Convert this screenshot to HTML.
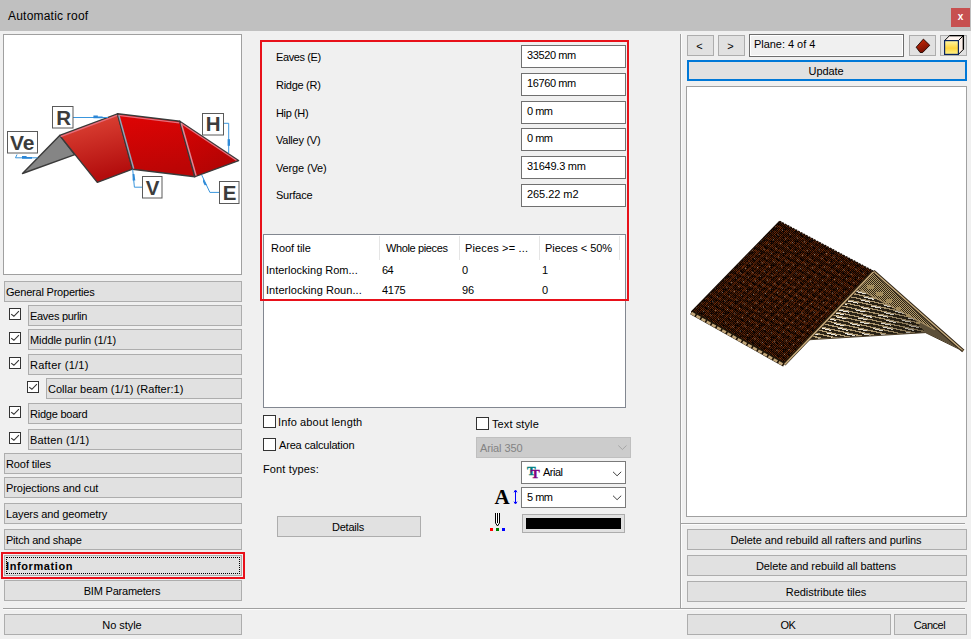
<!DOCTYPE html>
<html><head><meta charset="utf-8"><title>Automatic roof</title>
<style>
*{box-sizing:border-box;margin:0;padding:0}
html,body{width:971px;height:639px;overflow:hidden;background:#f0f0f0}
body{position:relative;font-family:"Liberation Sans","DejaVu Sans",sans-serif;font-size:11px;color:#000;line-height:13px}
.a{position:absolute;white-space:nowrap}
.title{left:0;top:0;width:971px;height:31px;background:#c0c0c0}
.title>span{position:absolute;left:8px;top:9px;font-size:12px;line-height:14px}
.close{left:951px;top:8px;width:19px;height:19px;background:#c75050;color:#fff;font-weight:bold;font-size:10px;text-align:center;line-height:17px}
.btn{background:#e1e1e1;border:1px solid #adadad;height:21px;line-height:19px;padding-left:1px;padding-top:1px}
.btn.c{text-align:center;padding-left:0;padding-right:2px}
.panel{background:#fff;border:1px solid #828790}
.cb{width:13px;height:13px;background:#fff;border:1px solid #333}
.inp{background:#fff;border:1px solid #707070;height:23px;line-height:19px;padding-left:5px;left:521px;width:105px}
.lbl{left:276px}
.hl{height:1px;background:#a0a0a0}
.vl{width:1px;background:#a0a0a0}
</style></head><body>
<div class="a title"><span><span class="t" style="letter-spacing:0.21px">Automatic roof</span></span></div>
<div class="a close"><span class="t">x</span></div>

<!-- left preview -->
<div class="a panel" style="left:3px;top:34px;width:239px;height:241px;border-color:#a0a0a0"></div>
<svg class="a" style="left:4px;top:35px" width="237" height="239" viewBox="4 35 237 239">
<defs>
<linearGradient id="g1" x1="0" y1="0" x2="0.25" y2="1"><stop offset="0" stop-color="#e24a3a"/><stop offset="1" stop-color="#b30d0d"/></linearGradient>
<linearGradient id="g2" x1="0" y1="0" x2="0.2" y2="1"><stop offset="0" stop-color="#e00404"/><stop offset="1" stop-color="#bb0505"/></linearGradient>
<linearGradient id="g3" x1="0" y1="0" x2="0.6" y2="1"><stop offset="0" stop-color="#d80303"/><stop offset="1" stop-color="#b00404"/></linearGradient>
</defs>
<g stroke-linejoin="round">
<polygon points="22.5,173.5 59.7,135.4 74.8,154.7" fill="#858585" stroke="#3a3a3a" stroke-width="1.4"/>
<polygon points="59.7,135.4 117.5,113.8 132.5,169.2 97.3,182.4" fill="url(#g1)" stroke="#3a3a3a" stroke-width="1.4"/>
<polygon points="117.5,113.8 179.8,121.3 194.9,176.7 132.5,169.2" fill="url(#g2)" stroke="#3a3a3a" stroke-width="1.4"/>
<polygon points="179.8,121.3 238.6,160.7 194.9,176.7" fill="url(#g3)" stroke="#3a3a3a" stroke-width="1.4"/>
<path d="M60.6,136.6 L117.2,115.4 M118.5,115.4 L179.3,122.8 M181.2,123.6 L236.5,160.4" stroke="#e4707e" stroke-width="1.2" fill="none"/>
<path d="M118.9,115.4 L133.7,168.6" stroke="#93a4b8" stroke-width="1.5" fill="none"/>
<path d="M181.2,123 L196.1,175.6" stroke="#de8896" stroke-width="1.5" fill="none"/>
</g>
<g fill="none" stroke="#3a96dd" stroke-width="1">
<path d="M73,117.5 H108"/><path d="M93.4,115.6 h4.4 v1 h4.8 v1.7 h-9.2z" fill="#2b86d6" stroke="none"/>
<path d="M17,154.5 L15.5,157.8 H37.6"/><path d="M22,155.9 h4.6 v1 h5.4 v1.8 h-10z" fill="#2b86d6" stroke="none"/>
<path d="M132.7,169.5 L134.4,187.2 H142.3"/><path d="M132.6,174 l1.8,0 l0.9,6.6 l-2.7,0z" fill="#2f8ad8" stroke="none"/>
<path d="M223.6,123.3 H228.7 V153.2"/><path d="M227.6,139.2 h2.4 v6.6 h-2.4z" fill="#2f8ad8" stroke="none"/>
<path d="M201.6,174.8 L209.9,192.4 H219.3"/><path d="M203.2,178.4 l3.6,6.6 l-2.2,0.2 l-1.6,-3.4z" fill="#2f8ad8" stroke="none"/>
</g>
<g fill="#fff" stroke="#5a5a5a" stroke-width="1">
<rect x="7.5" y="131.5" width="30" height="21.5"/>
<rect x="52.5" y="106.5" width="20.5" height="21.5"/>
<rect x="202.5" y="113.5" width="21" height="21.5"/>
<rect x="142.5" y="176.5" width="19.5" height="21.5"/>
<rect x="219.5" y="181.5" width="19.5" height="22"/>
</g>
<g font-family="'Liberation Sans',sans-serif" font-weight="bold" font-size="20.5" fill="#3c3c3c" text-anchor="middle">
<text x="22.2" y="149.8" textLength="24.5" lengthAdjust="spacingAndGlyphs">Ve</text>
<text x="63.6" y="125">R</text>
<text x="213.1" y="130.7">H</text>
<text x="152.5" y="194.5">V</text>
<text x="229.5" y="199.9">E</text>
</g>
</svg>

<!-- left buttons -->
<div class="a btn" style="left:4px;top:281px;width:238px"><span class="t" style="letter-spacing:-0.21px">General Properties</span></div>
<div class="a cb" style="left:9px;top:308px;width:12px;height:12px"><svg width="10" height="10" viewBox="1 1 10 10" style="display:block"><path d="M2.2,6.1 L4.9,8.3 L9.9,3.1" fill="none" stroke="#333" stroke-width="1.1"/></svg></div>
<div class="a btn" style="left:28px;top:305px;width:214px"><span class="t" style="letter-spacing:-0.29px">Eaves purlin</span></div>
<div class="a cb" style="left:9px;top:332px;width:12px;height:12px"><svg width="10" height="10" viewBox="1 1 10 10" style="display:block"><path d="M2.2,6.1 L4.9,8.3 L9.9,3.1" fill="none" stroke="#333" stroke-width="1.1"/></svg></div>
<div class="a btn" style="left:28px;top:329px;width:214px"><span class="t" style="letter-spacing:-0.10px">Middle purlin (1/1)</span></div>
<div class="a cb" style="left:9px;top:357px;width:12px;height:12px"><svg width="10" height="10" viewBox="1 1 10 10" style="display:block"><path d="M2.2,6.1 L4.9,8.3 L9.9,3.1" fill="none" stroke="#333" stroke-width="1.1"/></svg></div>
<div class="a btn" style="left:28px;top:354px;width:214px"><span class="t" style="letter-spacing:0.25px">Rafter (1/1)</span></div>
<div class="a cb" style="left:27px;top:381px;width:12px;height:12px"><svg width="10" height="10" viewBox="1 1 10 10" style="display:block"><path d="M2.2,6.1 L4.9,8.3 L9.9,3.1" fill="none" stroke="#333" stroke-width="1.1"/></svg></div>
<div class="a btn" style="left:46px;top:378px;width:196px"><span class="t" style="letter-spacing:0.03px">Collar beam (1/1) (Rafter:1)</span></div>
<div class="a cb" style="left:9px;top:406px;width:12px;height:12px"><svg width="10" height="10" viewBox="1 1 10 10" style="display:block"><path d="M2.2,6.1 L4.9,8.3 L9.9,3.1" fill="none" stroke="#333" stroke-width="1.1"/></svg></div>
<div class="a btn" style="left:28px;top:403px;width:214px"><span class="t" style="letter-spacing:-0.23px">Ridge board</span></div>
<div class="a cb" style="left:9px;top:432px;width:12px;height:12px"><svg width="10" height="10" viewBox="1 1 10 10" style="display:block"><path d="M2.2,6.1 L4.9,8.3 L9.9,3.1" fill="none" stroke="#333" stroke-width="1.1"/></svg></div>
<div class="a btn" style="left:28px;top:429px;width:214px"><span class="t" style="letter-spacing:0.16px">Batten (1/1)</span></div>
<div class="a btn" style="left:4px;top:453px;width:238px"><span class="t" style="letter-spacing:-0.10px">Roof tiles</span></div>
<div class="a btn" style="left:4px;top:477px;width:238px"><span class="t" style="letter-spacing:-0.07px">Projections and cut</span></div>
<div class="a btn" style="left:4px;top:503px;width:238px"><span class="t" style="letter-spacing:-0.12px">Layers and geometry</span></div>
<div class="a btn" style="left:4px;top:529px;width:238px"><span class="t" style="letter-spacing:-0.22px">Pitch and shape</span></div>
<div class="a" style="left:1px;top:552px;width:244px;height:27px;border:2px solid #e8111a"></div>
<div class="a btn" style="left:4px;top:555px;width:238px;font-weight:bold"><span class="t" style="letter-spacing:0.60px">Information</span></div>
<div class="a" style="left:6px;top:557px;width:234px;height:17px;border:1px dotted #000"></div>
<div class="a btn c" style="left:4px;top:580px;width:238px"><span class="t" style="letter-spacing:-0.21px">BIM Parameters</span></div>
<div class="a hl" style="left:3px;top:608px;width:962px"></div><div class="a hl" style="left:3px;top:609px;width:962px;background:#fcfcfc"></div>
<div class="a btn c" style="left:4px;top:614px;width:238px"><span class="t" style="letter-spacing:-0.06px">No style</span></div>

<!-- middle -->
<div class="a lbl" style="top:51px"><span class="t" style="letter-spacing:-0.39px">Eaves (E)</span></div>
<div class="a lbl" style="top:79px"><span class="t" style="letter-spacing:-0.28px">Ridge (R)</span></div>
<div class="a lbl" style="top:107px"><span class="t" style="letter-spacing:-0.38px">Hip (H)</span></div>
<div class="a lbl" style="top:134px"><span class="t" style="letter-spacing:-0.25px">Valley (V)</span></div>
<div class="a lbl" style="top:162px"><span class="t" style="letter-spacing:-0.15px">Verge (Ve)</span></div>
<div class="a lbl" style="top:189px"><span class="t" style="letter-spacing:-0.22px">Surface</span></div>
<div class="a inp" style="top:45px"><span class="t" style="letter-spacing:-0.39px">33520 mm</span></div>
<div class="a inp" style="top:73px"><span class="t" style="letter-spacing:-0.39px">16760 mm</span></div>
<div class="a inp" style="top:101px"><span class="t" style="letter-spacing:-0.50px">0 mm</span></div>
<div class="a inp" style="top:128px"><span class="t" style="letter-spacing:-0.50px">0 mm</span></div>
<div class="a inp" style="top:156px"><span class="t" style="letter-spacing:-0.25px">31649.3 mm</span></div>
<div class="a inp" style="top:184px"><span class="t" style="letter-spacing:-0.06px">265.22 m2</span></div>

<div class="a panel" style="left:263px;top:234px;width:363px;height:174px"></div>
<div class="a" style="left:271px;top:242px"><span class="t" style="letter-spacing:-0.06px">Roof tile</span></div>
<div class="a" style="left:386px;top:242px"><span class="t" style="letter-spacing:-0.37px">Whole pieces</span></div>
<div class="a" style="left:465px;top:242px"><span class="t" style="letter-spacing:0.15px">Pieces &gt;= ...</span></div>
<div class="a" style="left:545px;top:242px"><span class="t" style="letter-spacing:-0.04px">Pieces &lt; 50%</span></div>
<div class="a" style="left:379px;top:236px;width:1px;height:24px;background:#e5e5e5"></div>
<div class="a" style="left:459px;top:236px;width:1px;height:24px;background:#e5e5e5"></div>
<div class="a" style="left:539px;top:236px;width:1px;height:24px;background:#e5e5e5"></div>
<div class="a" style="left:619px;top:236px;width:1px;height:24px;background:#e5e5e5"></div>
<div class="a" style="left:266px;top:264px"><span class="t">Interlocking Rom...</span></div>
<div class="a" style="left:382px;top:264px"><span class="t" style="letter-spacing:-0.50px">64</span></div>
<div class="a" style="left:462px;top:264px"><span class="t">0</span></div>
<div class="a" style="left:542px;top:264px"><span class="t">1</span></div>
<div class="a" style="left:266px;top:284px"><span class="t" style="letter-spacing:0.05px">Interlocking Roun...</span></div>
<div class="a" style="left:382px;top:284px"><span class="t" style="letter-spacing:-0.30px">4175</span></div>
<div class="a" style="left:462px;top:284px"><span class="t">96</span></div>
<div class="a" style="left:542px;top:284px"><span class="t">0</span></div>
<div class="a" style="left:260px;top:40px;width:369px;height:261px;border:2px solid #e8111a"></div>

<div class="a cb" style="left:263px;top:415px"></div>
<div class="a" style="left:278px;top:416px"><span class="t" style="letter-spacing:0.14px">Info about length</span></div>
<div class="a cb" style="left:263px;top:438px"></div>
<div class="a" style="left:279px;top:439px"><span class="t" style="letter-spacing:-0.18px">Area calculation</span></div>
<div class="a" style="left:263px;top:463px"><span class="t" style="letter-spacing:0.13px">Font types:</span></div>
<div class="a cb" style="left:476px;top:417px"></div>
<div class="a" style="left:492px;top:418px"><span class="t" style="letter-spacing:0.10px">Text style</span></div>
<div class="a" style="left:476px;top:437px;width:155px;height:21px;background:#cccccc;border:1px solid #bfbfbf;color:#838383;line-height:21px;padding-left:3px"><span class="t" style="letter-spacing:-0.11px">Arial 350</span></div>
<div class="a" style="left:521px;top:461px;width:105px;height:23px;background:#fff;border:1px solid #7a7a7a;line-height:21px;padding-left:21px"><span class="t" style="letter-spacing:-0.50px">Arial</span></div>
<div class="a" style="left:521px;top:487px;width:105px;height:21px;background:#fff;border:1px solid #7a7a7a;line-height:19px;padding-left:5px"><span class="t" style="letter-spacing:-0.50px">5 mm</span></div>
<div class="a" style="left:522px;top:514px;width:103px;height:19px;background:#e1e1e1;border:1px solid #adadad"></div>
<div class="a" style="left:526px;top:518px;width:95px;height:11px;background:#000"></div>
<svg class="a" style="left:485px;top:430px" width="150" height="110" viewBox="485 430 150 110">
<path d="M618.3,445.5 l4.1,4 l4.1,-4" fill="none" stroke="#a6a6a6" stroke-width="1"/>
<path d="M613,471.8 l4.1,4 l4.1,-4" fill="none" stroke="#404040" stroke-width="1"/>
<path d="M613,495.7 l4.1,4 l4.1,-4" fill="none" stroke="#404040" stroke-width="1"/>
<text x="527" y="474.8" font-family="'Liberation Serif',serif" font-weight="bold" font-size="13" fill="#008080" stroke="#008080" stroke-width="0.35">T</text>
<text x="530.8" y="477.9" font-family="'Liberation Serif',serif" font-weight="bold" font-size="13.5" fill="#800080" stroke="#800080" stroke-width="0.35">T</text>
<text x="494.6" y="504.1" font-family="'Liberation Serif',serif" font-weight="bold" font-size="21" fill="#000">A</text>
<path d="M515.5,491 V503" stroke="#0000ff" stroke-width="1" fill="none"/>
<path d="M514,492.3 L515.5,490 L517,492.3 M514,501.7 L515.5,504 L517,501.7" stroke="#0000ff" stroke-width="1" fill="none"/>
<path d="M495.5,513 V523 L497.5,526 L499.5,523 V513" fill="#fff" stroke="#000" stroke-width="1"/>
<path d="M497.5,513 V523" stroke="#000" stroke-width="1"/>
<rect x="490" y="528" width="3" height="3" fill="#ff0000"/>
<rect x="496" y="528" width="3" height="3" fill="#008000"/>
<rect x="502" y="528" width="3" height="3" fill="#0000ff"/>
</svg>
<div class="a btn c" style="left:277px;top:516px;width:144px"><span class="t" style="letter-spacing:-0.22px">Details</span></div>

<!-- right -->
<div class="a vl" style="left:680px;top:34px;height:574px"></div><div class="a vl" style="left:681px;top:34px;height:574px;background:#fcfcfc"></div>
<div class="a btn c" style="left:687px;top:35px;width:27px"><span class="t">&lt;</span></div>
<div class="a btn c" style="left:718px;top:35px;width:27px"><span class="t">&gt;</span></div>
<div class="a" style="left:749px;top:34px;width:155px;height:23px;border:1px solid #6e6e6e;box-shadow:inset 0 0 0 1px #fff;line-height:19px;padding-left:4px"><span class="t" style="letter-spacing:-0.04px">Plane: 4 of 4</span></div>
<div class="a btn" style="left:909px;top:35px;width:27px"></div>
<div class="a btn" style="left:940px;top:35px;width:27px"></div>
<svg class="a" style="left:909px;top:33px" width="60" height="26" viewBox="909 33 60 26">
<defs><linearGradient id="dg" x1="0.3" y1="0" x2="0.7" y2="1"><stop offset="0" stop-color="#c82a08"/><stop offset="1" stop-color="#6e0d02"/></linearGradient>
<linearGradient id="cg" x1="0" y1="0" x2="0" y2="1"><stop offset="0" stop-color="#fff7a6"/><stop offset="0.55" stop-color="#ffd53f"/><stop offset="1" stop-color="#fff38c"/></linearGradient></defs>
<polygon points="923.4,39.1 929.8,45.3 922.7,52.5 920.1,52.5 916.2,47.2" fill="url(#dg)" stroke="#1a0500" stroke-width="0.9" stroke-linejoin="round"/>
<polygon points="944.6,40.6 949.6,35.6 963.4,35.6 958.4,40.6" fill="#fdf3ee" stroke="#000" stroke-width="1"/>
<polygon points="958.4,40.6 963.4,35.6 963.4,49.4 958.4,54.4" fill="#fbeee8" stroke="#000" stroke-width="1"/>
<path d="M949.6,35.6 H963.4 V49.4" stroke="#000" stroke-width="1.3" fill="none"/>
<rect x="944.6" y="40.6" width="13.8" height="13.8" fill="url(#cg)" stroke="#0a2460" stroke-width="1.2"/>
</svg>
<div class="a btn c" style="left:687px;top:60px;width:280px;border:2px solid #0078d7;line-height:17px"><span class="t" style="letter-spacing:-0.09px">Update</span></div>
<div class="a panel" style="left:686px;top:86px;width:281px;height:431px;border-color:#a0a0a0"></div>
<svg class="a" style="left:687px;top:87px" width="279" height="429" viewBox="687 87 279 429">
<defs>
<pattern id="tile" width="12" height="12" patternUnits="userSpaceOnUse"><rect width="12" height="12" fill="#100400"/><rect x="0" y="0" width="1" height="1" fill="#582308"/><rect x="2" y="0" width="1" height="1" fill="#552208"/><rect x="4" y="0" width="1" height="1" fill="#552208"/><rect x="6" y="0" width="1" height="1" fill="#3e1906"/><rect x="10" y="0" width="1" height="1" fill="#3b1705"/><rect x="1" y="1" width="1" height="1" fill="#5b2409"/><rect x="7" y="1" width="1" height="1" fill="#3b1705"/><rect x="9" y="1" width="1" height="1" fill="#67290a"/><rect x="11" y="1" width="1" height="1" fill="#542108"/><rect x="0" y="2" width="1" height="1" fill="#522008"/><rect x="2" y="2" width="1" height="1" fill="#6f2c0b"/><rect x="4" y="2" width="1" height="1" fill="#4a1d07"/><rect x="6" y="2" width="1" height="1" fill="#3d1806"/><rect x="8" y="2" width="1" height="1" fill="#67290a"/><rect x="10" y="2" width="1" height="1" fill="#67290a"/><rect x="11" y="2" width="1" height="1" fill="#2e1204"/><rect x="1" y="3" width="1" height="1" fill="#6e2c0b"/><rect x="5" y="3" width="1" height="1" fill="#481c07"/><rect x="6" y="3" width="1" height="1" fill="#321405"/><rect x="7" y="3" width="1" height="1" fill="#622709"/><rect x="9" y="3" width="1" height="1" fill="#3f1906"/><rect x="10" y="3" width="1" height="1" fill="#411a06"/><rect x="11" y="3" width="1" height="1" fill="#582308"/><rect x="0" y="4" width="1" height="1" fill="#431b06"/><rect x="2" y="4" width="1" height="1" fill="#5c2509"/><rect x="4" y="4" width="1" height="1" fill="#451b06"/><rect x="6" y="4" width="1" height="1" fill="#65280a"/><rect x="8" y="4" width="1" height="1" fill="#451b06"/><rect x="10" y="4" width="1" height="1" fill="#5c2509"/><rect x="1" y="5" width="1" height="1" fill="#471c07"/><rect x="3" y="5" width="1" height="1" fill="#491d07"/><rect x="4" y="5" width="1" height="1" fill="#2a1104"/><rect x="5" y="5" width="1" height="1" fill="#461c07"/><rect x="7" y="5" width="1" height="1" fill="#522008"/><rect x="9" y="5" width="1" height="1" fill="#582308"/><rect x="11" y="5" width="1" height="1" fill="#411a06"/><rect x="0" y="6" width="1" height="1" fill="#66280a"/><rect x="2" y="6" width="1" height="1" fill="#612709"/><rect x="4" y="6" width="1" height="1" fill="#6d2b0a"/><rect x="6" y="6" width="1" height="1" fill="#502008"/><rect x="10" y="6" width="1" height="1" fill="#5f2609"/><rect x="1" y="7" width="1" height="1" fill="#491d07"/><rect x="3" y="7" width="1" height="1" fill="#3d1806"/><rect x="5" y="7" width="1" height="1" fill="#67290a"/><rect x="7" y="7" width="1" height="1" fill="#6b2b0a"/><rect x="11" y="7" width="1" height="1" fill="#3c1806"/><rect x="0" y="8" width="1" height="1" fill="#4d1f07"/><rect x="2" y="8" width="1" height="1" fill="#4d1e07"/><rect x="4" y="8" width="1" height="1" fill="#5d2509"/><rect x="6" y="8" width="1" height="1" fill="#411a06"/><rect x="7" y="8" width="1" height="1" fill="#281004"/><rect x="8" y="8" width="1" height="1" fill="#5f2609"/><rect x="1" y="9" width="1" height="1" fill="#4a1d07"/><rect x="5" y="9" width="1" height="1" fill="#6a2a0a"/><rect x="7" y="9" width="1" height="1" fill="#64280a"/><rect x="9" y="9" width="1" height="1" fill="#5e2509"/><rect x="11" y="9" width="1" height="1" fill="#502008"/><rect x="0" y="10" width="1" height="1" fill="#68290a"/><rect x="2" y="10" width="1" height="1" fill="#4e1f07"/><rect x="4" y="10" width="1" height="1" fill="#3d1806"/><rect x="6" y="10" width="1" height="1" fill="#692a0a"/><rect x="8" y="10" width="1" height="1" fill="#612709"/><rect x="10" y="10" width="1" height="1" fill="#67290a"/><rect x="11" y="10" width="1" height="1" fill="#401906"/><rect x="0" y="11" width="1" height="1" fill="#3b1705"/><rect x="1" y="11" width="1" height="1" fill="#461c07"/><rect x="3" y="11" width="1" height="1" fill="#5b2409"/><rect x="5" y="11" width="1" height="1" fill="#3a1705"/><rect x="7" y="11" width="1" height="1" fill="#441b06"/><rect x="9" y="11" width="1" height="1" fill="#5d2509"/><rect x="11" y="11" width="1" height="1" fill="#4b1e07"/></pattern>

<pattern id="dots" width="2" height="2" patternUnits="userSpaceOnUse"><rect width="2" height="2" fill="#b39a6a"/><rect width="1" height="1" fill="#2e2516"/><rect x="1" y="1" width="1" height="1" fill="#2e2516"/></pattern>
<linearGradient id="ug" gradientUnits="userSpaceOnUse" x1="820" y1="0" x2="935" y2="0"><stop offset="0" stop-color="#1a140a" stop-opacity="0"/><stop offset="0.55" stop-color="#1a140a" stop-opacity="0.12"/><stop offset="1" stop-color="#1a140a" stop-opacity="0.55"/></linearGradient><clipPath id="tc"><polygon points="779.5,221.3 873.4,271.3 784.2,364.3 691.3,312"/></clipPath>
</defs>
<clipPath id="uc"><polygon points="866,280 935,330 925.4,332.4 808.5,339.5"/></clipPath><g clip-path="url(#uc)" shape-rendering="crispEdges" fill="none"><rect x="800" y="270" width="150" height="80" fill="#2a2317"/><path d="M805,235.0 L940,264.9 M805,238.7 L940,268.6 M805,242.4 L940,272.3 M805,246.1 L940,276.0 M805,249.7 L940,279.7 M805,253.4 L940,283.4 M805,257.1 L940,287.1 M805,260.8 L940,290.7 M805,264.5 L940,294.4 M805,268.2 L940,298.1 M805,271.9 L940,301.8 M805,275.6 L940,305.5 M805,279.2 L940,309.2 M805,282.9 L940,312.9 M805,286.6 L940,316.6 M805,290.3 L940,320.2 M805,294.0 L940,323.9 M805,297.7 L940,327.6 M805,301.4 L940,331.3 M805,305.1 L940,335.0 M805,308.7 L940,338.7 M805,312.4 L940,342.4 M805,316.1 L940,346.1 M805,319.8 L940,349.7 M805,323.5 L940,353.4 M805,327.2 L940,357.1 M805,330.9 L940,360.8 M805,334.6 L940,364.5 M805,338.2 L940,368.2 M805,341.9 L940,371.9" stroke="#b7a076" stroke-width="1.25"/><path d="M805,236.1 L940,266.0" stroke="#f4f1e9" stroke-width="1" stroke-dasharray="10 14" stroke-dashoffset="6"/><path d="M805,239.8 L940,269.7" stroke="#f4f1e9" stroke-width="1" stroke-dasharray="10 14" stroke-dashoffset="13"/><path d="M805,243.5 L940,273.4" stroke="#f4f1e9" stroke-width="1" stroke-dasharray="10 14" stroke-dashoffset="9"/><path d="M805,247.2 L940,277.1" stroke="#f4f1e9" stroke-width="1" stroke-dasharray="10 14" stroke-dashoffset="14"/><path d="M805,250.8 L940,280.8" stroke="#f4f1e9" stroke-width="1" stroke-dasharray="10 14" stroke-dashoffset="15"/><path d="M805,254.5 L940,284.5" stroke="#f4f1e9" stroke-width="1" stroke-dasharray="10 14" stroke-dashoffset="2"/><path d="M805,258.2 L940,288.2" stroke="#f4f1e9" stroke-width="1" stroke-dasharray="10 14" stroke-dashoffset="0"/><path d="M805,261.9 L940,291.8" stroke="#f4f1e9" stroke-width="1" stroke-dasharray="10 14" stroke-dashoffset="20"/><path d="M805,265.6 L940,295.5" stroke="#f4f1e9" stroke-width="1" stroke-dasharray="10 14" stroke-dashoffset="6"/><path d="M805,269.3 L940,299.2" stroke="#f4f1e9" stroke-width="1" stroke-dasharray="10 14" stroke-dashoffset="6"/><path d="M805,273.0 L940,302.9" stroke="#f4f1e9" stroke-width="1" stroke-dasharray="10 14" stroke-dashoffset="24"/><path d="M805,276.7 L940,306.6" stroke="#f4f1e9" stroke-width="1" stroke-dasharray="10 14" stroke-dashoffset="11"/><path d="M805,280.3 L940,310.3" stroke="#f4f1e9" stroke-width="1" stroke-dasharray="10 14" stroke-dashoffset="20"/><path d="M805,284.0 L940,314.0" stroke="#f4f1e9" stroke-width="1" stroke-dasharray="10 14" stroke-dashoffset="11"/><path d="M805,287.7 L940,317.7" stroke="#f4f1e9" stroke-width="1" stroke-dasharray="10 14" stroke-dashoffset="15"/><path d="M805,291.4 L940,321.3" stroke="#f4f1e9" stroke-width="1" stroke-dasharray="10 14" stroke-dashoffset="4"/><path d="M805,295.1 L940,325.0" stroke="#f4f1e9" stroke-width="1" stroke-dasharray="10 14" stroke-dashoffset="15"/><path d="M805,298.8 L940,328.7" stroke="#f4f1e9" stroke-width="1" stroke-dasharray="10 14" stroke-dashoffset="21"/><path d="M805,302.5 L940,332.4" stroke="#f4f1e9" stroke-width="1" stroke-dasharray="10 14" stroke-dashoffset="13"/><path d="M805,306.2 L940,336.1" stroke="#f4f1e9" stroke-width="1" stroke-dasharray="10 14" stroke-dashoffset="18"/><path d="M805,309.8 L940,339.8" stroke="#f4f1e9" stroke-width="1" stroke-dasharray="10 14" stroke-dashoffset="16"/><path d="M805,313.5 L940,343.5" stroke="#f4f1e9" stroke-width="1" stroke-dasharray="10 14" stroke-dashoffset="2"/><path d="M805,317.2 L940,347.2" stroke="#f4f1e9" stroke-width="1" stroke-dasharray="10 14" stroke-dashoffset="18"/><path d="M805,320.9 L940,350.8" stroke="#f4f1e9" stroke-width="1" stroke-dasharray="10 14" stroke-dashoffset="14"/><path d="M805,324.6 L940,354.5" stroke="#f4f1e9" stroke-width="1" stroke-dasharray="10 14" stroke-dashoffset="7"/><path d="M805,328.3 L940,358.2" stroke="#f4f1e9" stroke-width="1" stroke-dasharray="10 14" stroke-dashoffset="1"/><path d="M805,332.0 L940,361.9" stroke="#f4f1e9" stroke-width="1" stroke-dasharray="10 14" stroke-dashoffset="21"/><path d="M805,335.7 L940,365.6" stroke="#f4f1e9" stroke-width="1" stroke-dasharray="10 14" stroke-dashoffset="11"/><path d="M805,339.3 L940,369.3" stroke="#f4f1e9" stroke-width="1" stroke-dasharray="10 14" stroke-dashoffset="17"/><path d="M805,343.0 L940,373.0" stroke="#f4f1e9" stroke-width="1" stroke-dasharray="10 14" stroke-dashoffset="21"/><rect x="800" y="270" width="150" height="80" fill="url(#ug)"/></g>
<polygon points="873.2,271.4 963.1,350.7 925.4,332.4" fill="#5c4f38"/>
<polygon points="873.2,272.5 935,329.5 859,289" fill="url(#dots)"/>
<g shape-rendering="crispEdges"><rect x="866.5" y="284.6" width="7.0" height="4.5" fill="#a8905f" fill-opacity="0.85"/><rect x="876.4" y="292.0" width="6.3" height="4.0" fill="#a8905f" fill-opacity="0.85"/><rect x="886.3" y="299.4" width="5.6" height="3.6" fill="#a8905f" fill-opacity="0.85"/><rect x="896.2" y="306.8" width="4.9" height="3.1" fill="#a8905f" fill-opacity="0.85"/><rect x="906.2" y="314.2" width="4.2" height="2.7" fill="#a8905f" fill-opacity="0.85"/><rect x="916.1" y="321.7" width="3.5" height="2.2" fill="#a8905f" fill-opacity="0.85"/></g><path d="M859,289 L935,329.8" stroke="#a89066" stroke-width="1.2" fill="none"/>
<path d="M873.4,271.3 L963.3,351" stroke="#2e2214" stroke-width="3.4" fill="none"/>
<path d="M873.4,271.3 L963.3,351" stroke="#c8ae80" stroke-width="1.4" fill="none"/>
<path d="M808.5,339.8 L925.4,332.6 L963,351" stroke="#4a3c26" stroke-width="1" fill="none"/>
<polygon points="779.5,221.3 873.4,271.3 784.2,364.3 691.3,312" fill="url(#tile)"/>
<g clip-path="url(#tc)"><g transform="matrix(93.9 50 -88.2 90.7 779.5 221.3)" fill="none">
<path d="M0.0556,0 V1 M0.1111,0 V1 M0.1667,0 V1 M0.2222,0 V1 M0.2778,0 V1 M0.3333,0 V1 M0.3889,0 V1 M0.4444,0 V1 M0.5000,0 V1 M0.5556,0 V1 M0.6111,0 V1 M0.6667,0 V1 M0.7222,0 V1 M0.7778,0 V1 M0.8333,0 V1 M0.8889,0 V1 M0.9444,0 V1 " stroke="#9a3c0e" stroke-opacity="0.45" stroke-width="1" vector-effect="non-scaling-stroke"/>
<path d="M0,0.0237 H1 M0,0.0763 H1 M0,0.1289 H1 M0,0.1816 H1 M0,0.2342 H1 M0,0.2868 H1 M0,0.3395 H1 M0,0.3921 H1 M0,0.4447 H1 M0,0.4974 H1 M0,0.5500 H1 M0,0.6026 H1 M0,0.6553 H1 M0,0.7079 H1 M0,0.7605 H1 M0,0.8132 H1 M0,0.8658 H1 M0,0.9184 H1 M0,0.9711 H1 " stroke="#000" stroke-opacity="0.38" stroke-width="1.6" vector-effect="non-scaling-stroke"/>
<path d="M0,0.0526 H1 M0,0.1053 H1 M0,0.1579 H1 M0,0.2105 H1 M0,0.2632 H1 M0,0.3158 H1 M0,0.3684 H1 M0,0.4211 H1 M0,0.4737 H1 M0,0.5263 H1 M0,0.5789 H1 M0,0.6316 H1 M0,0.6842 H1 M0,0.7368 H1 M0,0.7895 H1 M0,0.8421 H1 M0,0.8947 H1 M0,0.9474 H1 " stroke="#8f897c" stroke-width="1" stroke-dasharray="1 7.3" vector-effect="non-scaling-stroke"/>
</g></g>
<path d="M691.3,312.3 L784.2,364.6" stroke="#1e1408" stroke-width="4.6" fill="none"/>
<path d="M691.3,313 L784.2,365.3" stroke="#c2a679" stroke-width="2.6" stroke-dasharray="4.3 1.6" fill="none"/>
<path d="M873.4,271.3 L784.2,364.3" stroke="#2a1c0c" stroke-width="3.4" fill="none"/>
<path d="M873.6,271.8 L784.6,364.6" stroke="#c9ad7e" stroke-width="1.5" fill="none"/>
<path d="M779.5,221.3 L873.4,271.3" stroke="#1a0d05" stroke-width="1.5" stroke-dasharray="2 1" fill="none"/>
<path d="M779.5,221.3 L691.3,312" stroke="#1a0d05" stroke-width="1.2" fill="none"/>
</svg>
<div class="a hl" style="left:680px;top:523px;width:285px"></div><div class="a hl" style="left:681px;top:524px;width:284px;background:#fcfcfc"></div>
<div class="a btn c" style="left:687px;top:529px;width:280px"><span class="t" style="letter-spacing:-0.08px">Delete and rebuild all rafters and purlins</span></div>
<div class="a btn c" style="left:687px;top:555px;width:280px"><span class="t" style="letter-spacing:-0.08px">Delete and rebuild all battens</span></div>
<div class="a btn c" style="left:687px;top:581px;width:280px"><span class="t" style="letter-spacing:-0.05px">Redistribute tiles</span></div>
<div class="a btn c" style="left:687px;top:614px;width:204px"><span class="t" style="letter-spacing:-0.50px">OK</span></div>
<div class="a btn c" style="left:894px;top:614px;width:73px"><span class="t" style="letter-spacing:-0.45px">Cancel</span></div>
</body></html>
